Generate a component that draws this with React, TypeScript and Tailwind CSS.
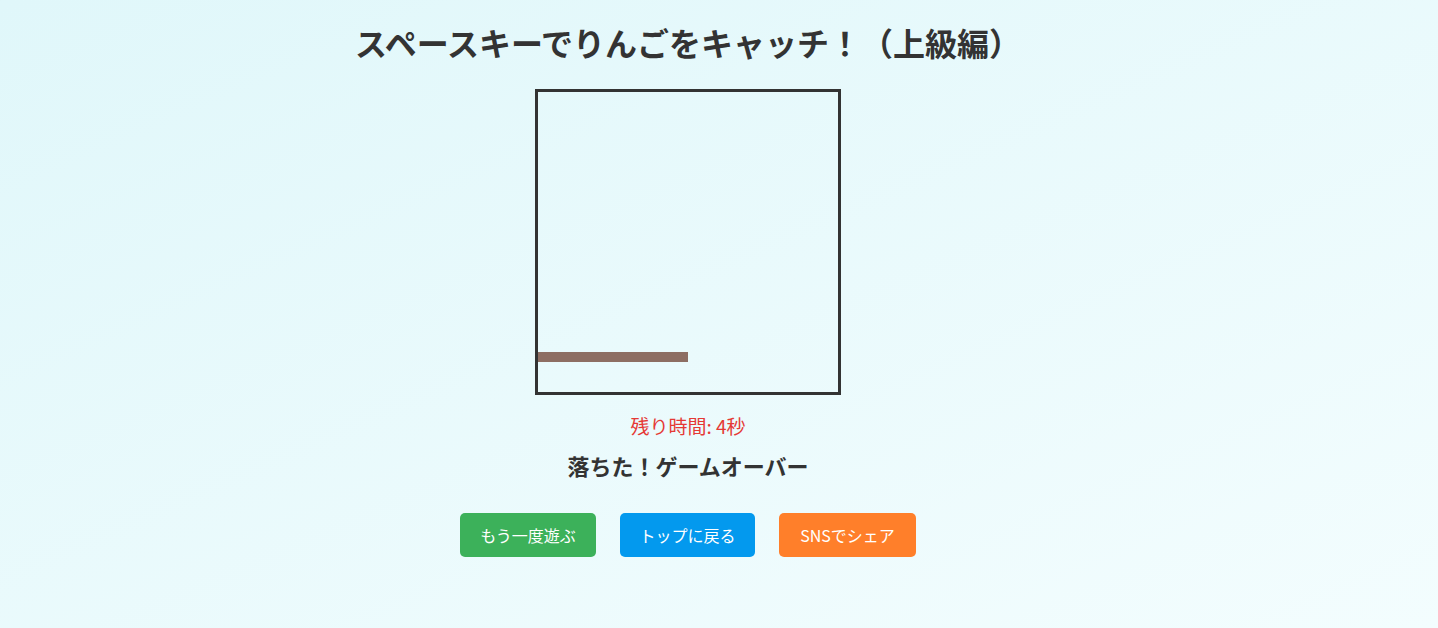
export default function App() {
  return (
    <div
      className="min-h-screen w-full bg-gradient-to-br from-[#e0f7fa] to-[#f3fdfe] text-[#333]"
      style={{ fontFamily: '"Noto Sans CJK JP", "Noto Sans", sans-serif' }}
    >
      <div className="flex flex-col items-center pr-[62px] pt-[22px]">
        {/* Title */}
        <h1 className="text-[32px] font-bold leading-[40px]">
          スペースキーでりんごをキャッチ！（上級編）
        </h1>

        {/* Game canvas */}
        <div className="mt-[27px] flex h-[306px] w-[306px] flex-col border-[3px] border-[#333]">
          <div className="h-[260px]" />
          <div className="h-[10px] w-[150px] bg-[#8d6e63]" />
        </div>

        {/* Status */}
        <div className="mt-[17px] text-[19px] leading-[27px] text-[#e53935]">残り時間: 4秒</div>
        <div className="mt-[10px] text-[22px] font-bold leading-[33px]">落ちた！ゲームオーバー</div>

        {/* Buttons */}
        <div className="mt-[31px] flex gap-6">
          <button className="h-[44px] w-[136px] rounded-[5px] bg-[#3cb15a] text-[16px] text-white">
            もう一度遊ぶ
          </button>
          <button className="h-[44px] w-[135px] rounded-[5px] bg-[#0399ee] text-[16px] text-white">
            トップに戻る
          </button>
          <button className="h-[44px] w-[137px] rounded-[5px] bg-[#ff7f2a] text-[16px] text-white">
            SNSでシェア
          </button>
        </div>
      </div>
    </div>
  );
}
